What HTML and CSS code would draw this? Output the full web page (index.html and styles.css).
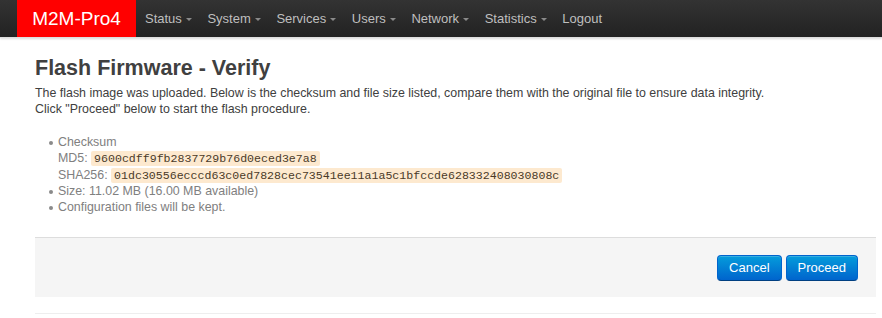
FILE: index.html
```html
<!DOCTYPE html>
<html>
<head>
<meta charset="utf-8">
<link rel="stylesheet" href="styles.css">
</head>
<body>
<header class="navbar">
  <a class="brand" href="#">M2M-Pro4</a>
  <ul class="nav">
    <li><a href="#">Status <span class="caret"></span></a></li>
    <li><a href="#">System <span class="caret"></span></a></li>
    <li><a href="#">Services <span class="caret"></span></a></li>
    <li><a href="#">Users <span class="caret"></span></a></li>
    <li><a href="#">Network <span class="caret"></span></a></li>
    <li><a href="#">Statistics <span class="caret"></span></a></li>
    <li><a href="#">Logout</a></li>
  </ul>
</header>
<main class="container">
  <h2 class="title">Flash Firmware - Verify</h2>
  <p class="desc">The flash image was uploaded. Below is the checksum and file size listed, compare them with the original file to ensure data integrity.<br>Click "Proceed" below to start the flash procedure.</p>
  <ul class="facts">
    <li>Checksum<br>MD5: <code>9600cdff9fb2837729b76d0eced3e7a8</code><br>SHA256: <code>01dc30556ecccd63c0ed7828cec73541ee11a1a5c1bfccde628332408030808c</code></li>
    <li>Size: 11.02 MB (16.00 MB available)</li>
    <li>Configuration files will be kept.</li>
  </ul>
  <div class="actions">
    <button class="btn">Cancel</button>
    <button class="btn">Proceed</button>
  </div>
  <div class="footer-line"></div>
</main>
</body>
</html>
```
FILE: styles.css
```css
html, body {
  margin: 0;
  padding: 0;
  background: #fff;
  font-family: "Liberation Sans", Arial, sans-serif;
  font-size: 12px;
  color: #404040;
}
.navbar {
  display: flex;
  align-items: stretch;
  height: 37px;
  background: linear-gradient(#333, #222);
  border-bottom: 1px solid #ddd;
  box-shadow: 0 1px 2px rgba(0,0,0,0.15);
}
.brand {
  display: flex;
  align-items: center;
  justify-content: center;
  margin-left: 17px;
  width: 119px;
  background: #f00;
  color: #fff;
  font-size: 19px;
  text-decoration: none;
}
.nav {
  display: flex;
  list-style: none;
  margin: 0;
  padding: 0 0 0 9px;
}
.nav li a {
  display: flex;
  align-items: center;
  height: 37px;
  padding: 0 9px 0 0;
  margin-right: 6.6px;
  color: #bfbfbf;
  font-size: 13px;
  text-decoration: none;
}
.caret {
  display: inline-block;
  width: 0;
  height: 0;
  margin-left: 4px;
  margin-top: 1px;
  border-left: 3px solid transparent;
  border-right: 3px solid transparent;
  border-top: 3px solid #8a8a8a;
}
.container {
  margin: 0 6px 0 35px;
}
.title {
  margin: 17px 0 4px;
  font-size: 21.5px;
  font-weight: bold;
  color: #404040;
  line-height: 26px;
}
.desc {
  margin: 0 0 17px;
  font-size: 12.4px;
  line-height: 16px;
}
.facts {
  margin: 0 0 22px;
  padding-left: 23px;
  font-size: 12.4px;
  line-height: 16.3px;
  color: #808080;
  list-style: none;
}
.facts li {
  position: relative;
}
.facts li::before {
  content: "";
  position: absolute;
  left: -9px;
  top: 7px;
  width: 4px;
  height: 4px;
  border-radius: 50%;
  background: #8a8a8a;
}
code {
  font-family: "Liberation Mono", "Courier New", monospace;
  font-size: 11.6px;
  line-height: 1;
  background: #fde9cf;
  color: #4a3a28;
  padding: 1px 3px;
  border-radius: 2px;
}
.actions {
  display: flex;
  justify-content: flex-end;
  gap: 4px;
  height: 59px;
  padding: 0 18px 0 0;
  align-items: center;
  background: #f5f5f5;
  border-top: 1px solid #ddd;
  margin-bottom: 16px;
}
.btn {
  height: 26px;
  padding: 0 11px;
  font-family: "Liberation Sans", Arial, sans-serif;
  font-size: 13px;
  color: #fff;
  background: linear-gradient(#049cdb, #0064cd);
  border: 1px solid #0064cd;
  border-bottom-color: #003f81;
  border-radius: 4px;
  box-shadow: inset 0 1px 0 rgba(255,255,255,0.2);
}
.footer-line {
  border-top: 1px solid #eee;
}
```
